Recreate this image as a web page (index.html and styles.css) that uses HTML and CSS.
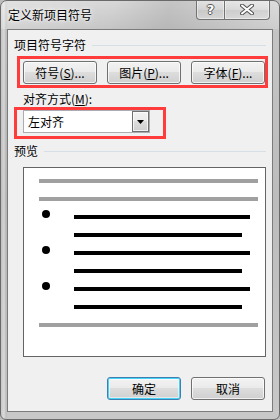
FILE: index.html
```html
<!DOCTYPE html>
<html lang="zh-CN">
<head>
    <meta charset="UTF-8">
    <title>定义新项目符号</title>
    <link rel="stylesheet" href="styles.css">
</head>
<body>

<div class="window">
    <div class="titlebar">
        <span class="title">定义新项目符号</span>
        <div class="caption-buttons">
            <span class="cap-btn cap-help">?</span>
            <span class="cap-btn cap-close">
                <svg width="14" height="11" viewBox="0 0 14 11">
                    <path d="M2 1.5 L12 9.5 M12 1.5 L2 9.5" stroke="#555" stroke-width="4" stroke-linecap="round"/>
                    <path d="M2 1.5 L12 9.5 M12 1.5 L2 9.5" stroke="#fff" stroke-width="2" stroke-linecap="round"/>
                </svg>
            </span>
        </div>
    </div>

    <div class="client">
        <!-- 项目符号字符 -->
        <div class="group-head first">
            <span>项目符号字符</span>
            <span class="rule"></span>
        </div>
        <div class="mark mark-buttons">
            <button class="btn">符号(<u>S</u>)...</button>
            <button class="btn">图片(<u>P</u>)...</button>
            <button class="btn">字体(<u>F</u>)...</button>
        </div>

        <div class="field-label">对齐方式(<u>M</u>):</div>
        <div class="mark mark-select">
            <div class="select">
                <span class="select-text">左对齐</span>
                <span class="select-arrow">
                    <svg width="7" height="4" viewBox="0 0 7 4"><path d="M0 0 H7 L3.5 4 Z" fill="#000"/></svg>
                </span>
            </div>
        </div>

        <!-- 预览 -->
        <div class="group-head preview-head">
            <span>预览</span>
            <span class="rule"></span>
        </div>
        <div class="preview">
            <div class="pv-row"><span class="pv-gray"></span></div>
            <div class="pv-row"><span class="pv-gray"></span></div>
            <div class="pv-row"><span class="bullet"></span><span class="pv-line long"></span></div>
            <div class="pv-row indent"><span class="pv-line short"></span></div>
            <div class="pv-row"><span class="bullet"></span><span class="pv-line long"></span></div>
            <div class="pv-row indent"><span class="pv-line short"></span></div>
            <div class="pv-row"><span class="bullet"></span><span class="pv-line long"></span></div>
            <div class="pv-row indent"><span class="pv-line short"></span></div>
            <div class="pv-row"><span class="pv-gray"></span></div>
        </div>

        <div class="actions">
            <button class="btn default">确定</button>
            <button class="btn">取消</button>
        </div>
    </div>
</div>

</body>
</html>
```
FILE: styles.css
```css
body {
    margin: 0;
    padding: 0;
    background: #bdbdbd;
    font-family: "Noto Sans CJK SC", "Noto Sans", sans-serif;
    font-size: 12px;
    color: #000;
}
.window {
    width: 280px;
    height: 420px;
    box-sizing: border-box;
    border: 1px solid #6a6a6a;
    border-radius: 7px 7px 6px 6px;
    background:
        linear-gradient(90deg, rgba(255,255,255,0.0) 0, rgba(255,255,255,0.35) 3px, rgba(0,0,0,0.05) 5px, rgba(255,255,255,0) 7px),
        linear-gradient(180deg, #d8d8d8 0, #c4c4c4 30px, #bcbcbc 200px, #c8c8c8 420px);
    overflow: hidden;
}
.titlebar {
    height: 28px;
    display: flex;
    justify-content: space-between;
    align-items: flex-start;
    padding-left: 7px;
    background: linear-gradient(100deg, rgba(255,255,255,0.25) 0, rgba(255,255,255,0) 40%, rgba(140,140,140,0.25) 60%, rgba(255,255,255,0.15) 100%);
}
.title {
    margin-top: 6px;
    font-size: 12px;
    line-height: 16px;
    text-shadow: 0 0 6px rgba(255,255,255,0.9), 0 0 3px rgba(255,255,255,0.9);
}
.caption-buttons {
    display: flex;
    margin-top: -1px;
    margin-right: 9px;
}
.cap-btn {
    height: 20px;
    box-sizing: border-box;
    border: 1px solid #727272;
    border-top: none;
    display: flex;
    align-items: center;
    justify-content: center;
    background: linear-gradient(180deg, rgba(255,255,255,0.45) 0, rgba(255,255,255,0.2) 50%, rgba(200,200,200,0.3) 51%, rgba(230,230,230,0.5) 100%);
    box-shadow: inset 0 0 0 1px rgba(255,255,255,0.45);
}
.cap-help {
    width: 28px;
    border-right: none;
    border-radius: 0 0 0 4px;
    font-family: "DejaVu Sans", sans-serif;
    font-weight: bold;
    font-size: 13px;
    color: #fff;
    text-shadow: 1px 0 0 #555, -1px 0 0 #555, 0 1px 0 #555, 0 -1px 0 #555;
}
.cap-close {
    width: 46px;
    border-radius: 0 0 4px 0;
}
.client {
    margin: 0 6px;
    height: 383px;
    box-sizing: border-box;
    border: 1px solid #7b7b7b;
    background: #f0f0f0;
    padding: 0;
}
.group-head {
    display: flex;
    align-items: center;
    padding-left: 6px;
    padding-right: 6px;
    line-height: 14px;
}
.group-head.first {
    margin-top: 8px;
}
.group-head .rule {
    flex: 1;
    height: 1px;
    margin-left: 6px;
    background: #d5dfe5;
}
.mark {
    border: 3px solid #ff3b3b;
    box-sizing: border-box;
}
.mark-buttons {
    margin: 4px 0 0 9px;
    width: 251px;
    height: 32px;
    display: flex;
    gap: 10px;
    padding: 2px 0 0 3px;
}
.btn {
    width: 74px;
    height: 23px;
    box-sizing: border-box;
    border: 1px solid #707070;
    border-radius: 3px;
    background: linear-gradient(180deg, #f2f2f2 0, #ebebeb 45%, #dddddd 50%, #cfcfcf 100%);
    box-shadow: inset 0 0 0 1px rgba(255,255,255,0.7);
    font-family: "Noto Sans CJK SC", "Noto Sans", sans-serif;
    font-size: 12px;
    color: #000;
    padding: 0;
    line-height: 20px;
}
.btn u {
    text-underline-offset: 1px;
}
.btn.default {
    border-color: #3c7fb1;
    box-shadow: inset 0 0 0 1px #48d3f9, inset 0 0 0 2px rgba(255,255,255,0.5);
}
.field-label {
    margin: 4px 0 0 15px;
    line-height: 14px;
}
.mark-select {
    margin: 1px 0 0 6px;
    width: 152px;
    height: 32px;
    padding: 0 0 0 6px;
}
.select {
    width: 127px;
    height: 23px;
    box-sizing: border-box;
    border: 1px solid #abadb3;
    background: #fff;
    display: flex;
    align-items: center;
    justify-content: space-between;
}
.select-text {
    padding-left: 4px;
    line-height: 16px;
}
.select-arrow {
    width: 17px;
    height: 21px;
    box-sizing: border-box;
    border: 1px solid #707070;
    background: linear-gradient(180deg, #f2f2f2 0, #ebebeb 45%, #dddddd 50%, #cfcfcf 100%);
    box-shadow: inset 0 0 0 1px rgba(255,255,255,0.7);
    display: flex;
    align-items: center;
    justify-content: center;
}
.preview-head {
    margin-top: 5px;
}
.preview {
    margin: 9px 0 0 15px;
    width: 243px;
    height: 190px;
    box-sizing: border-box;
    border: 1px solid #646464;
    background: #fff;
    padding: 11px 0 0 15px;
    display: flex;
    flex-direction: column;
    gap: 14px;
}
.pv-row {
    height: 4px;
    display: flex;
    align-items: flex-start;
}
.pv-row.indent {
    padding-left: 35px;
}
.pv-gray {
    width: 219px;
    height: 4px;
    background: #a0a0a0;
}
.bullet {
    width: 8px;
    height: 8px;
    border-radius: 50%;
    background: #000;
    margin: -5px 0 0 3px;
    flex-shrink: 0;
}
.pv-line {
    height: 4px;
    background: #000;
}
.pv-line.long {
    width: 176px;
    margin-left: 24px;
}
.pv-line.short {
    width: 168px;
}
.actions {
    display: flex;
    justify-content: flex-end;
    gap: 10px;
    padding-right: 7px;
    margin-top: 20px;
}
```
